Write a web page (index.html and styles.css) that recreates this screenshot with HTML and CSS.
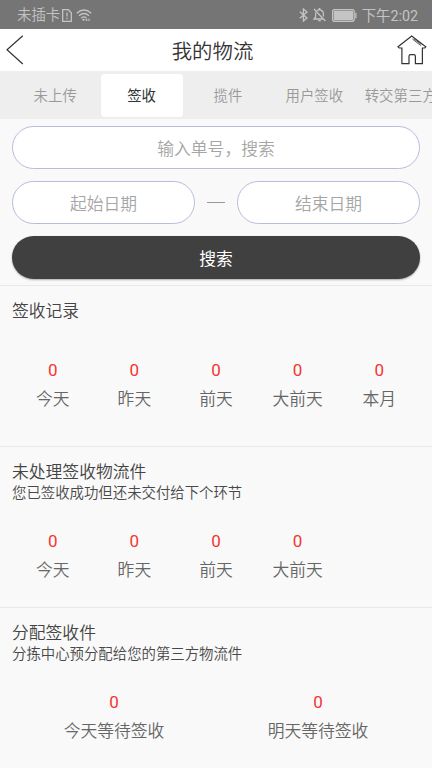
FILE: index.html
```
<!DOCTYPE html>
<html lang="zh-CN">
<head>
<meta charset="utf-8">
<meta name="viewport" content="width=device-width, initial-scale=1">
<title>我的物流</title>
<link rel="stylesheet" href="styles.css">
</head>
<body>
<div class="status">
  <span class="carrier">未插卡</span>
  <svg class="sim" width="10" height="13" viewBox="0 0 10 13"><path d="M.7.7H6.3L9.3 3.7V12.3H.7Z"/><path d="M5 3.6V7.4M5 8.8V10.2"/></svg>
  <svg class="wifi" width="16" height="13" viewBox="0 0 16 13"><path d="M.7 4.2Q8-2.2 15.3 4.2M3 6.7Q8 2.4 13 6.7M5.2 9.2Q8 6.8 10.4 9"/><path class="solid" d="M6.2 10.6 7.6 9.4 9 10.6 7.6 12.2ZM9.8 9.8h1.5v2.2H9.8ZM12.4 9.8h1.2v2.2h-1.2Z"/></svg>
  <span class="space"></span>
  <svg class="bt" width="9" height="14" viewBox="0 0 9 14"><path d="M.8 3.8 8 10 4.4 13V1L8 4 .8 10.2"/></svg>
  <svg class="bell" width="13" height="14" viewBox="0 0 13 14"><path d="M1 1 12.3 13M2.6 4.4V9L1 11H9.6M4 2.8Q5 1.8 6.2 1.8V.7H6.8V1.8Q10.4 2.4 10.4 6V8.6M5.2 12.6H7.8"/></svg>
  <svg class="battery" width="25" height="13" viewBox="0 0 25 13"><rect x=".6" y=".6" width="21.6" height="11.8" rx="1.8"/><rect class="solid" x="1.8" y="1.8" width="19.2" height="9.4" rx=".6"/><path d="M23.9 3.7V9.3"/></svg>
  <span class="time">下午2:02</span>
</div>
<header class="header">
  <svg class="back" width="18" height="30" viewBox="0 0 18 30"><path d="M16.8.8 1 14.8 16.8 29"/></svg>
  <h1>我的物流</h1>
  <svg class="home" width="30" height="30" viewBox="0 0 30 30"><path d="M1 11.8 14.7 1 28.8 11.8 27.8 13H25.4V28.6H18.4V21.2Q18.4 19.6 16.8 19.6H13.6Q12 19.6 12 21.2V28.6H4.9V13H2.2Z"/><path class="thin" d="M15.4 4 23.8 10.6M16.8 3.8 24.4 9.6"/></svg>
</header>
<nav class="tabs">
  <a class="tab">未上传</a>
  <a class="tab active">签收</a>
  <a class="tab">揽件</a>
  <a class="tab">用户签收</a>
  <a class="tab">转交第三方</a>
</nav>
<section class="search">
  <div class="field">输入单号，搜索</div>
  <div class="dates">
    <div class="field">起始日期</div>
    <span class="dash"></span>
    <div class="field">结束日期</div>
  </div>
  <button class="submit" type="button">搜索</button>
</section>
<section class="block">
  <h2>签收记录</h2>
  <div class="stats first">
    <div class="stat"><b>0</b><span>今天</span></div>
    <div class="stat"><b>0</b><span>昨天</span></div>
    <div class="stat"><b>0</b><span>前天</span></div>
    <div class="stat"><b>0</b><span>大前天</span></div>
    <div class="stat"><b>0</b><span>本月</span></div>
  </div>
</section>
<section class="block">
  <h2>未处理签收物流件</h2>
  <p>您已签收成功但还未交付给下个环节</p>
  <div class="stats">
    <div class="stat"><b>0</b><span>今天</span></div>
    <div class="stat"><b>0</b><span>昨天</span></div>
    <div class="stat"><b>0</b><span>前天</span></div>
    <div class="stat"><b>0</b><span>大前天</span></div>
  </div>
</section>
<section class="block">
  <h2>分配签收件</h2>
  <p>分拣中心预分配给您的第三方物流件</p>
  <div class="stats two">
    <div class="stat"><b>0</b><span>今天等待签收</span></div>
    <div class="stat"><b>0</b><span>明天等待签收</span></div>
  </div>
</section>
</body>
</html>
```
FILE: styles.css
```
* { box-sizing: border-box; }
html, body { height: 100%; }
body {
  margin: 0;
  overflow: hidden;
  background: #f9f9f9;
  color: #444;
  font-family: Roboto, "Noto Sans CJK SC", sans-serif;
  font-weight: 350;
}
h1, h2, p { margin: 0; font-weight: inherit; }
svg { flex: none; fill: none; }

.status {
  display: flex;
  align-items: center;
  height: 29px;
  padding: 1px 14px 0 17px;
  background: #757575;
  color: #c4c4c4;
  font-size: 14.4px;
  line-height: 26px;
}
.status svg { stroke: #c4c4c4; stroke-width: 1.3; }
.status .solid { fill: #c4c4c4; stroke: none; }
.carrier, .time { padding-top: 2px; }
.sim { margin-left: 2px; }
.wifi { margin-left: 4px; }
.space { flex: 1; }
.bell { margin-left: 5px; }
.battery { margin-left: 6px; }
.time { margin-left: 4.5px; font-size: 14.3px; font-weight: 400; }

.header {
  display: flex;
  align-items: center;
  justify-content: space-between;
  height: 42px;
  padding: 0 5px 0 6px;
  background: #fff;
}
.header svg { stroke: #333; stroke-width: 1.2; }
.header .thin { stroke-width: .8; }
.back { margin-right: 4px; }
.header h1 { padding-top: 3px; font-size: 20.4px; line-height: 42px; color: #333; }

.tabs {
  display: flex;
  height: 48px;
  padding: 3px 0 2px 12px;
  background: #eee;
  overflow: hidden;
}
.tab {
  flex: none;
  width: 82px;
  margin: 0 2.2px;
  padding-top: 2px;
  border-radius: 4px;
  color: #999;
  font-size: 14.4px;
  line-height: 42px;
  text-align: center;
  white-space: nowrap;
}
.tab.active { background: #fff; color: #333; font-weight: 400; }

.search { height: 167px; padding: 7px 12px 0; border-bottom: 1px solid #e8e8e8; }
.field {
  height: 43px;
  padding-top: 2px;
  border: 1px solid #b6bddb;
  border-radius: 22px;
  background: #fff;
  color: #a5a5a5;
  font-size: 16.8px;
  line-height: 40px;
  text-align: center;
}
.dates { display: flex; align-items: center; justify-content: space-between; margin: 12px 0; }
.dates .field { width: 183px; }
.dash { width: 18px; height: 1px; background: #999; }
.submit {
  display: block;
  width: 100%;
  height: 43px;
  padding: 2px 0 0;
  border: 0;
  border-radius: 22px;
  background: #404040;
  box-shadow: 0 1px 2px rgba(0, 0, 0, .3);
  color: #fff;
  font: 400 16.8px/42px Roboto, "Noto Sans CJK SC", sans-serif;
}

.block { height: 161px; padding: 13px 12px 0; border-bottom: 1px solid #e8e8e8; }
.block h2 { font-size: 16.8px; line-height: 25px; color: #444; }
.block p { font-size: 14.4px; line-height: 18px; color: #484848; }
.stats { display: grid; grid-template-columns: repeat(5, 1fr); margin-top: 24px; }
.stats.first { margin-top: 32px; }
.stats.two { grid-template-columns: repeat(2, 1fr); }
.stat { display: flex; flex-direction: column; align-items: center; font-size: 16.8px; line-height: 29px; color: #666; }
.stat b { color: #f43530; font-size: 17px; font-weight: 400; }
```
